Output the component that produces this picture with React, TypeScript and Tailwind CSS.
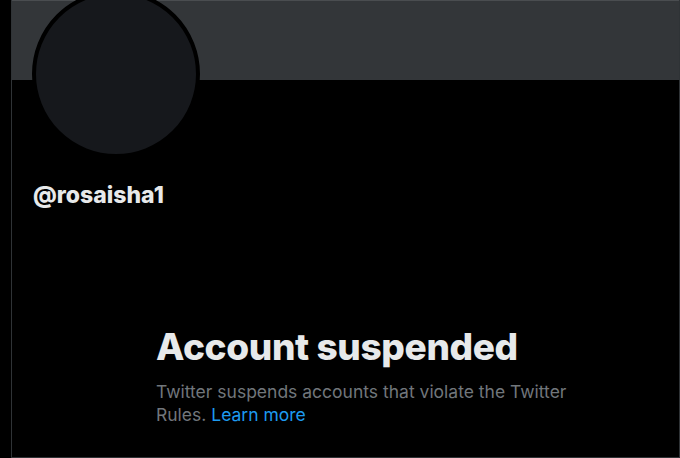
import React from "react";

const SuspendedProfile = () => {
  return (
    <div className="flex w-[680px] h-[458px] bg-black overflow-hidden font-['Inter',sans-serif]">
      <div className="w-[11px] flex-none" />
      <div className="flex-1 flex flex-col border-l border-r border-b border-[#2f3336] min-w-0">
        {/* header banner */}
        <div className="h-[80px] flex-none bg-[#333639] border-t border-[#4a4d50]" />
        {/* avatar */}
        <div className="-mt-[90px] ml-[20px] w-[168px] h-[168px] rounded-full bg-[#16181c] border-4 border-black flex-none" />
        <div className="mt-[24px] ml-[21px] text-[23px] leading-[26px] font-extrabold text-[#e7e9ea]">
          @rosaisha1
        </div>
        {/* suspension notice */}
        <div className="mt-[117px] pl-[144px] pr-[80px]">
          <h1 className="text-[37px] leading-[44px] font-extrabold text-[#e7e9ea] tracking-[-0.01em]">
            Account suspended
          </h1>
          <p className="mt-[11px] text-[17.5px] leading-[23px] text-[#71767b]">
            Twitter suspends accounts that violate the Twitter Rules.{" "}
            <a className="text-[#1d9bf0]">Learn more</a>
          </p>
        </div>
      </div>
    </div>
  );
};

export default function App() {
  return <SuspendedProfile />;
}
